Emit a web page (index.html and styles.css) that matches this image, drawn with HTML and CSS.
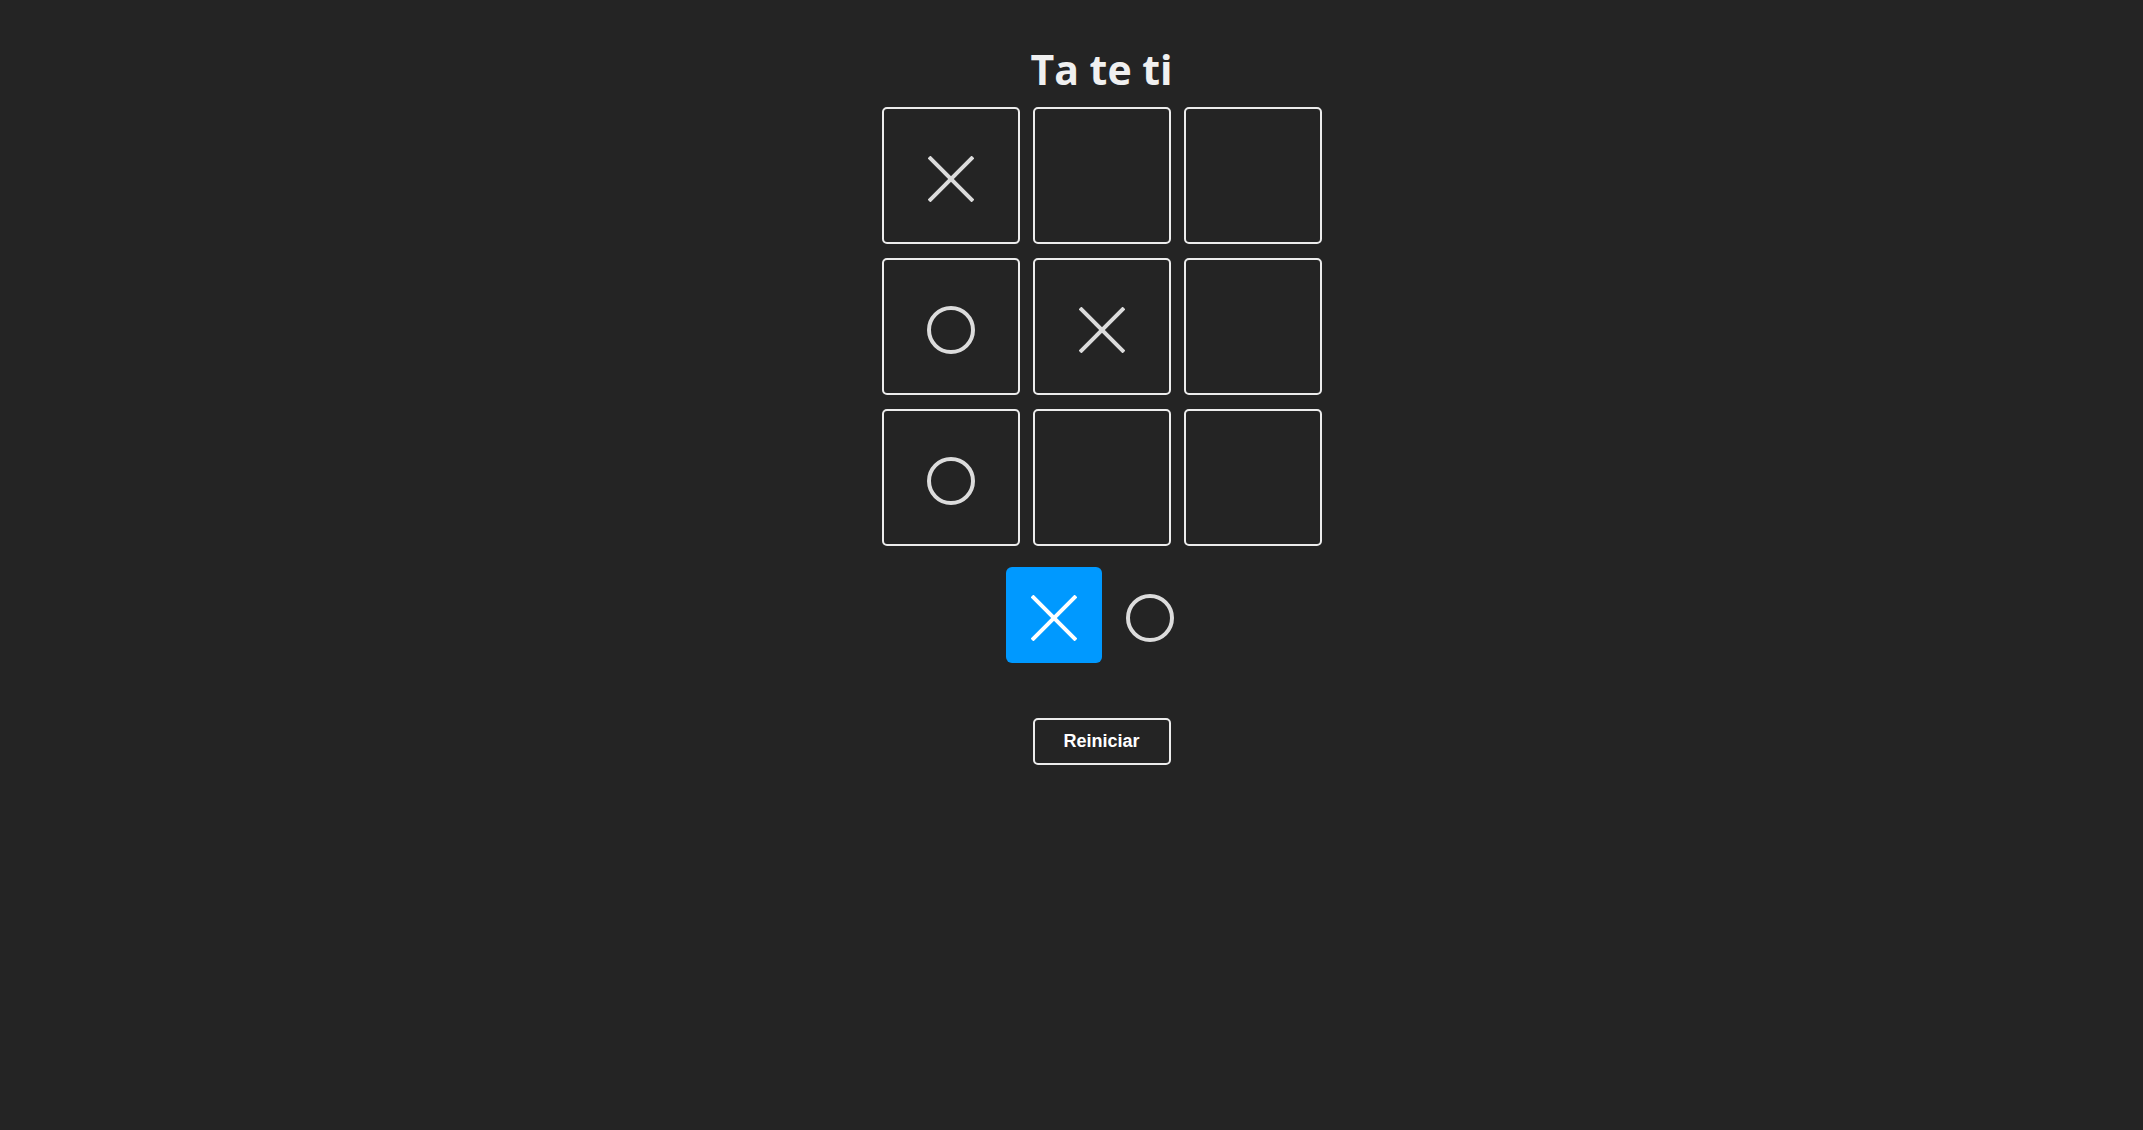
FILE: index.html
```html
<!DOCTYPE html>
<html lang="es">
<head>
<meta charset="utf-8">
<title>Ta te ti</title>
<link rel="stylesheet" href="styles.css">
</head>
<body>
<main class="game">
  <h1 class="title">Ta te ti</h1>
  <section class="board">
    <div class="cell"><svg class="mark" viewBox="0 0 46 46"><line x1="1" y1="1" x2="45" y2="45"/><line x1="45" y1="1" x2="1" y2="45"/></svg></div>
    <div class="cell"></div>
    <div class="cell"></div>
    <div class="cell"><svg class="mark mark-o" viewBox="0 0 48 48"><circle cx="24" cy="24" r="22"/></svg></div>
    <div class="cell"><svg class="mark" viewBox="0 0 46 46"><line x1="1" y1="1" x2="45" y2="45"/><line x1="45" y1="1" x2="1" y2="45"/></svg></div>
    <div class="cell"></div>
    <div class="cell"><svg class="mark mark-o" viewBox="0 0 48 48"><circle cx="24" cy="24" r="22"/></svg></div>
    <div class="cell"></div>
    <div class="cell"></div>
  </section>
  <section class="turn">
    <div class="turn-box is-active"><svg class="mark mark-light" viewBox="0 0 46 46"><line x1="1" y1="1" x2="45" y2="45"/><line x1="45" y1="1" x2="1" y2="45"/></svg></div>
    <div class="turn-box"><svg class="mark mark-o" viewBox="0 0 48 48"><circle cx="24" cy="24" r="22"/></svg></div>
  </section>
  <button class="reset" type="button">Reiniciar</button>
</main>
</body>
</html>
```

FILE: styles.css
```css
html, body {
  margin: 0;
  padding: 0;
  background: #242424;
  min-height: 100%;
}

body {
  font-family: "Open Sans", "Noto Sans", sans-serif;
  color: #efefef;
}

.game {
  display: flex;
  flex-direction: column;
  align-items: center;
  padding-left: 60px;
  padding-top: 44px;
}

.title {
  margin: 0 0 13px;
  font-size: 41px;
  line-height: 50px;
  font-weight: 700;
  color: #f0f0f0;
}

.board {
  display: grid;
  grid-template-columns: repeat(3, 138px);
  grid-auto-rows: 137px;
  column-gap: 13px;
  row-gap: 14px;
}

.cell {
  box-sizing: border-box;
  border: 2px solid #ececec;
  border-radius: 5px;
  display: flex;
  align-items: center;
  justify-content: center;
  padding-top: 6px;
}

.mark {
  width: 46px;
  height: 46px;
  fill: none;
  stroke: #dcdcdc;
  stroke-width: 4;
}

.mark-o {
  width: 48px;
  height: 48px;
}

.turn {
  display: flex;
  margin-top: 21px;
}

.turn-box {
  width: 96px;
  height: 96px;
  border-radius: 6px;
  display: flex;
  align-items: center;
  justify-content: center;
  box-sizing: border-box;
  padding-top: 6px;
}

.turn-box.is-active {
  background: #0099ff;
}

.mark-light {
  stroke: #ffffff;
}

.reset {
  margin-top: 55px;
  width: 138px;
  height: 47px;
  box-sizing: border-box;
  background: transparent;
  border: 2px solid #ececec;
  border-radius: 5px;
  color: #ffffff;
  font-family: "Liberation Sans", Arial, sans-serif;
  font-weight: 700;
  font-size: 18px;
  padding: 0;
  cursor: pointer;
}
```
